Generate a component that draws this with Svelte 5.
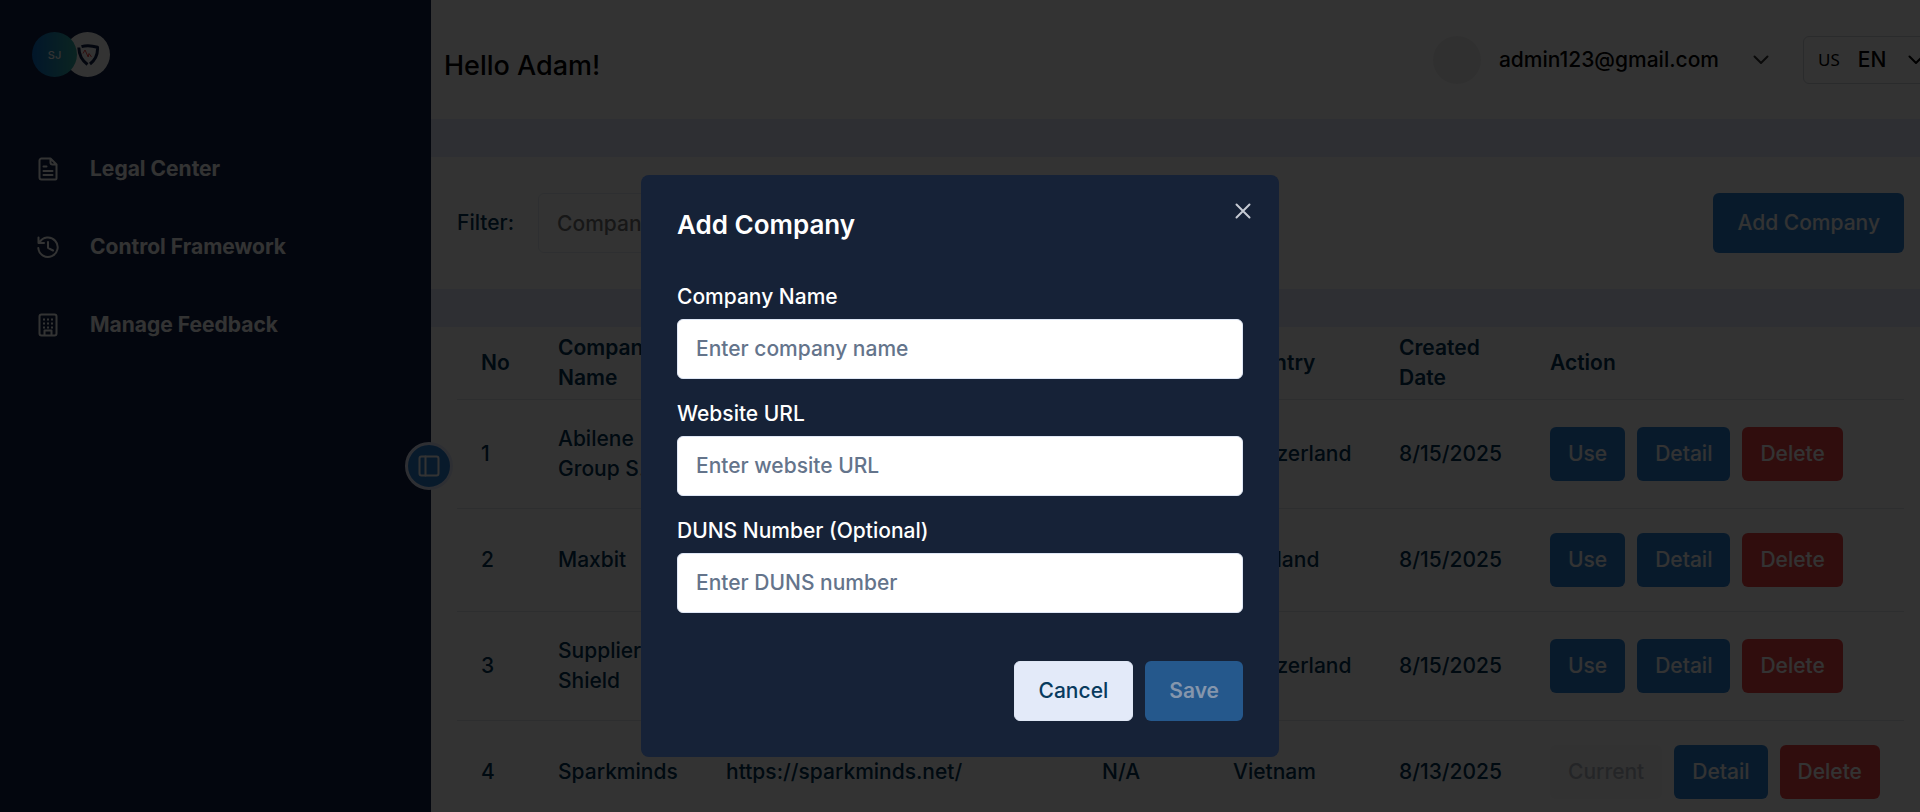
<script lang="ts">
  type Company = {
    name: string;
    website: string;
    duns: string;
    country: string;
    created: string;
    current?: boolean;
  };

  const companies: Company[] = [
    { name: 'Abilene Group S.A.', website: 'https://abilene.ch/', duns: 'N/A', country: 'Switzerland', created: '8/15/2025' },
    { name: 'Maxbit', website: 'https://maxbit.com/', duns: 'N/A', country: 'Thailand', created: '8/15/2025' },
    { name: 'Supplier Shield', website: 'https://suppliershield.com/', duns: 'N/A', country: 'Switzerland', created: '8/15/2025' },
    { name: 'Sparkminds', website: 'https://sparkminds.net/', duns: 'N/A', country: 'Vietnam', created: '8/13/2025', current: true }
  ];

  const navItems = [
    { label: 'Legal Center', icon: 'document' },
    { label: 'Control Framework', icon: 'history' },
    { label: 'Manage Feedback', icon: 'building' }
  ];

  let modalOpen = $state(true);
  let filter = $state('');
  let lang = $state('EN');
  let form = $state({ name: '', website: '', duns: '' });

  let canSave = $derived(form.name.trim() !== '' && form.website.trim() !== '');
</script>

{#snippet chevron()}
  <svg class="chevron" viewBox="0 0 16 10" aria-hidden="true"><path d="M1.5 1.5 8 8l6.5-6.5" /></svg>
{/snippet}

<div class="layout">
  <aside class="sidebar">
    <div class="logos">
      <span class="logo logo-sj">SJ</span>
      <span class="logo logo-shield">
        <svg viewBox="0 0 24 24" aria-hidden="true">
          <path class="shield" d="M5.5 3.6C10 2.2 15 2.2 21.5 4.3c.4 6.5-2 12.5-7.5 16.7" />
          <path class="shield" d="M2.8 4.5C3 11.5 6 17.5 11.5 21.5" />
          <path class="pulse" d="M7 10.5l2-3.5 3.2 7 .8-3.500 2.500 3.500" />
        </svg>
      </span>
    </div>

    <nav>
      {#each navItems as item}
        <a href="#{item.icon}" class="nav-item">
          <svg class="nav-icon" viewBox="0 0 24 24" aria-hidden="true">
            {#if item.icon === 'document'}
              <path d="M5.5 1.5h9l6 6v14a1 1 0 0 1-1 1h-14a2 2 0 0 1-2-2v-17a2 2 0 0 1 2-2zM14.5 1.5v4a2 2 0 0 0 2 2h4M7.5 9.5h3M7.5 14h9M7.5 18h9" />
            {:else if item.icon === 'history'}
              <path d="M3.5 7.5A9.7 9.7 0 1 1 2.3 13M2.5 2.5v5.5H8M12 7v5.8l5 2.7" />
            {:else}
              <rect x="3.5" y="1.5" width="17" height="21" rx="2" />
              <path d="M8.5 22v-4.5h7V22" />
              <path class="dots" d="M7 6.5h2M11 6.5h2M15 6.5h2M7 10.5h2M11 10.5h2M15 10.5h2M7 14.5h2M11 14.5h2M15 14.5h2" />
            {/if}
          </svg>
          <span>{item.label}</span>
        </a>
      {/each}
    </nav>

    <button class="toggle" type="button" aria-label="Toggle sidebar">
      <svg viewBox="0 0 22 22" aria-hidden="true">
        <rect x="1.5" y="1.5" width="19" height="19" rx="2" />
        <path d="M7.5 1.5v19" />
      </svg>
    </button>
  </aside>

  <main class="content">
    <header class="topbar">
      <h1>Hello Adam!</h1>
      <div class="topbar-right">
        <button class="user" type="button">
          <span class="avatar"></span>
          <span>admin123@gmail.com</span>
          {@render chevron()}
        </button>
        <label class="lang">
          <span class="flag">US</span>
          <select bind:value={lang} aria-label="Language">
            <option value="EN">EN</option>
            <option value="FR">FR</option>
          </select>
          {@render chevron()}
        </label>
      </div>
    </header>

    <section class="filter">
      <label for="filter">Filter:</label>
      <input id="filter" type="text" placeholder="Company" bind:value={filter} />
      <button class="btn primary large" type="button" onclick={() => (modalOpen = true)}>Add Company</button>
    </section>

    <section class="list">
      <table>
        <thead>
          <tr>
            <th class="col-no">No</th>
            <th class="col-name">Company Name</th>
            <th class="col-website">Website</th>
            <th class="col-duns">DUNS Number</th>
            <th class="col-country">Country</th>
            <th class="col-created">Created Date</th>
            <th>Action</th>
          </tr>
        </thead>
        <tbody>
          {#each companies as company, i}
            <tr>
              <td>{i + 1}</td>
              <td>{company.name}</td>
              <td>{company.website}</td>
              <td>{company.duns}</td>
              <td>{company.country}</td>
              <td>{company.created}</td>
              <td>
                <div class="actions">
                  {#if company.current}
                    <button class="btn current" type="button" disabled>Current</button>
                  {:else}
                    <button class="btn primary" type="button">Use</button>
                  {/if}
                  <button class="btn primary" type="button">Detail</button>
                  <button class="btn danger" type="button">Delete</button>
                </div>
              </td>
            </tr>
          {/each}
        </tbody>
      </table>
    </section>
  </main>
</div>

{#if modalOpen}
  <div class="overlay">
    <div class="modal" role="dialog" aria-modal="true" aria-labelledby="modal-title">
      <button class="close" type="button" aria-label="Close" onclick={() => (modalOpen = false)}>
        <svg viewBox="0 0 16 16" aria-hidden="true"><path d="M1.5 1.5l13 13M14.5 1.5l-13 13" /></svg>
      </button>
      <h2 id="modal-title">Add Company</h2>
      <form onsubmit={(e) => e.preventDefault()}>
        <div class="field">
          <label for="company-name">Company Name</label>
          <input id="company-name" type="text" placeholder="Enter company name" bind:value={form.name} />
        </div>
        <div class="field">
          <label for="website-url">Website URL</label>
          <input id="website-url" type="text" placeholder="Enter website URL" bind:value={form.website} />
        </div>
        <div class="field">
          <label for="duns-number">DUNS Number (Optional)</label>
          <input id="duns-number" type="text" placeholder="Enter DUNS number" bind:value={form.duns} />
        </div>
        <div class="modal-actions">
          <button class="btn secondary large" type="button" onclick={() => (modalOpen = false)}>Cancel</button>
          <button class="btn save large" type="submit" disabled={!canSave}>Save</button>
        </div>
      </form>
    </div>
  </div>
{/if}

<style>
  :global(body) {
    background: #e6ebff;
    color: #003354;
    font-family: Inter, sans-serif;
    font-size: 21px;
    font-weight: 500;
    line-height: 30px;
    overflow: hidden;
  }

  .layout,
  .layout *,
  .overlay,
  .overlay * {
    box-sizing: border-box;
  }

  button,
  input,
  select {
    font: inherit;
    color: inherit;
  }

  svg {
    display: block;
    fill: none;
    stroke: currentColor;
    stroke-width: 2;
    stroke-linecap: round;
    stroke-linejoin: round;
  }

  .layout {
    display: flex;
    height: 100vh;
  }

  /* Sidebar */
  .sidebar {
    position: relative;
    flex: 0 0 431px;
    padding: 32px;
    background: #0f1f46;
    color: #fff;
  }

  .logos {
    display: flex;
    margin-bottom: 53px;
  }

  .logo {
    display: flex;
    align-items: center;
    justify-content: center;
    width: 45px;
    height: 45px;
    border-radius: 50%;
    font-size: 11px;
    line-height: 16px;
  }

  .logo-sj {
    position: relative;
    z-index: 1;
    background: linear-gradient(90deg, #0a6fd0, #36b3a4);
  }

  .logo-shield {
    margin-left: -12px;
    background: #fff;
  }

  .logo-shield svg {
    width: 24px;
    height: 24px;
    stroke-linecap: butt;
  }

  .shield {
    stroke: #0f1f46;
    stroke-width: 3;
  }

  .pulse {
    stroke: #ef4444;
    stroke-width: 1;
  }

  .nav-item {
    display: flex;
    align-items: center;
    gap: 30px;
    height: 78px;
    padding-left: 4px;
    color: inherit;
    font-weight: 700;
    text-decoration: none;
  }

  .nav-icon {
    width: 24px;
    height: 24px;
  }

  .dots {
    stroke-linecap: butt;
  }

  .toggle {
    position: absolute;
    top: 442px;
    right: -22px;
    z-index: 2;
    display: flex;
    align-items: center;
    justify-content: center;
    width: 48px;
    height: 48px;
    padding: 0;
    border: 3px solid #e6ebff;
    border-radius: 50%;
    background: #2c84d8;
    color: #fff;
  }

  .toggle svg {
    flex: none;
    width: 22px;
    height: 22px;
  }

  /* Page */
  .content {
    flex: 1;
    min-width: 0;
    display: flex;
    flex-direction: column;
    gap: 38px;
    overflow: hidden;
  }

  .topbar {
    flex: none;
    display: flex;
    justify-content: space-between;
    height: 119px;
    padding: 36px 0 0 13px;
    background: #fff;
    color: #000;
  }

  h1,
  h2 {
    margin: 0;
  }

  h1 {
    padding-top: 15px;
    font-size: 27px;
    font-weight: 500;
  }

  .topbar-right {
    display: flex;
    gap: 34px;
    margin-right: -28px;
  }

  .user {
    display: flex;
    align-items: center;
    gap: 18px;
    height: 48px;
    padding: 0;
    border: 0;
    background: none;
  }

  .user .chevron {
    margin-left: 16px;
    stroke: #333;
  }

  .avatar {
    width: 48px;
    height: 48px;
    border-radius: 50%;
    background: #f0f0f0;
  }

  .chevron {
    width: 16px;
    height: 10px;
  }

  .lang {
    display: flex;
    align-items: center;
    width: 145px;
    height: 48px;
    padding-left: 14px;
    border: 1px solid #d0d4da;
    border-radius: 6px;
  }

  .flag {
    font-family: "Noto Sans", sans-serif;
    font-size: 17px;
    font-weight: 400;
  }

  .lang select {
    width: 50px;
    margin-left: 18px;
    padding: 0;
    border: 0;
    background: none;
    appearance: none;
  }

  .filter {
    flex: none;
    display: flex;
    align-items: center;
    padding: 36px 16px 36px 26px;
    background: #fff;
  }

  .filter label {
    margin-right: 24px;
  }

  .filter input {
    width: 360px;
    height: 60px;
    padding: 0 18px;
    border: 1px solid #e6ebf2;
    border-radius: 6px;
    background: #fff;
  }

  .filter .btn {
    margin-left: auto;
  }

  .list {
    flex: 1;
    padding: 0 16px 0 26px;
    background: #fff;
  }

  table {
    width: 100%;
    border-collapse: collapse;
    table-layout: fixed;
  }

  th,
  td {
    padding: 24px;
    border-bottom: 1px solid #e2e4e8;
    text-align: left;
  }

  th {
    padding: 6px 24px;
    font-weight: 600;
  }

  td:last-child,
  th:last-child {
    padding-right: 0;
  }

  .col-no {
    width: 77px;
  }

  .col-name {
    width: 168px;
  }

  .col-website {
    width: 376px;
  }

  .col-duns {
    width: 131px;
  }

  .col-country {
    width: 166px;
  }

  .col-created {
    width: 151px;
  }

  td:nth-child(2),
  td:nth-child(5) {
    padding-right: 12px;
  }

  .actions {
    display: flex;
    gap: 12px;
  }

  /* Buttons */
  .btn {
    height: 54px;
    padding: 0 18px;
    border: 0;
    border-radius: 6px;
    color: #fff;
    font-weight: 500;
  }

  .btn.large {
    height: 60px;
    padding: 0 24px;
  }

  .btn.primary {
    background: #2c84d8;
  }

  .btn.danger {
    background: #ef4444;
  }

  .btn.current {
    background: #fafafa;
    color: #b4b9c2;
  }

  .btn.secondary {
    border: 1px solid #dfe7f5;
    background: #e3eaf9;
    color: #083a5e;
  }

  .btn.save {
    background: #2c84d8;
    font-weight: 600;
  }

  .btn.save:disabled {
    background: #25588c;
    color: #8596ac;
  }

  /* Modal */
  .overlay {
    position: fixed;
    inset: 0;
    z-index: 10;
    display: flex;
    align-items: flex-start;
    justify-content: center;
    padding-top: 175px;
    background: rgba(0, 0, 0, 0.8);
  }

  .modal {
    position: relative;
    width: 638px;
    max-width: 100%;
    padding: 36px;
    border-radius: 8px;
    background: #162237;
    color: #fff;
  }

  .modal h2 {
    margin-bottom: 43px;
    font-size: 26px;
    font-weight: 600;
    line-height: 28px;
  }

  .close {
    position: absolute;
    top: 28px;
    right: 28px;
    padding: 0;
    border: 0;
    background: none;
    color: #c5cad3;
  }

  .close svg {
    width: 16px;
    height: 16px;
  }

  .field {
    display: flex;
    flex-direction: column;
    gap: 7px;
    margin-bottom: 20px;
  }

  .field input {
    width: 100%;
    height: 60px;
    padding: 0 18px 2px;
    border: 1px solid #dfe7f5;
    border-radius: 6px;
    background: #fff;
    color: #003354;
  }

  .field input::placeholder {
    color: #64748b;
    opacity: 1;
  }

  .modal-actions {
    display: flex;
    justify-content: flex-end;
    gap: 12px;
    padding-top: 28px;
  }
</style>
